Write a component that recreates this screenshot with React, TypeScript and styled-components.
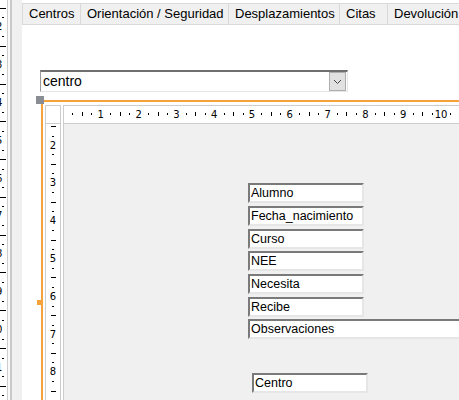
import styled, { createGlobalStyle } from 'styled-components'

const GlobalStyle = createGlobalStyle`
  html, body {
    margin: 0;
    padding: 0;
    overflow: hidden;
    background: #ffffff;
    font-family: "Liberation Sans", Arial, sans-serif;
  }
`

const ORANGE = '#f6a23a'
const CM = 37.8

const Page = styled.div`
  display: flex;
  width: 459px;
  height: 400px;
  overflow: hidden;
  background: #ffffff;
`

const OuterRuler = styled.div`
  flex: none;
  width: 7px;
  border-right: 1px solid #cdcdcd;
  overflow: hidden;
`

const Splitter = styled.div`
  flex: none;
  width: 14px;
  background: linear-gradient(
    to right,
    #fafafa 0 2px,
    #c9c9c9 2px 4px,
    #f0f0f0 4px
  );
`

const Main = styled.div`
  flex: 1;
  min-width: 0;
  display: flex;
  flex-direction: column;
`

const TabBar = styled.div`
  flex: none;
  display: flex;
  margin-top: 3px;
  height: 20px;
  border-top: 1px solid #d9d9d9;
  border-bottom: 1px solid #d9d9d9;
  background: #f0f0f0;
  overflow: hidden;
`

const Tab = styled.div<{ $w: number }>`
  flex: none;
  box-sizing: border-box;
  width: ${({ $w }) => $w}px;
  padding-left: 6px;
  border-right: 1px solid #d9d9d9;
  font-size: 13px;
  line-height: 20px;
  color: #000;
  white-space: nowrap;

  &:first-child {
    border-left: 1px solid #d9d9d9;
  }
`

const Designer = styled.div`
  flex: 1;
  display: flex;
  flex-direction: column;
  padding-left: 18px;
  min-height: 0;
`

const Combo = styled.div`
  flex: none;
  display: flex;
  align-items: center;
  box-sizing: border-box;
  margin-top: 45px;
  width: 308px;
  height: 22px;
  border-top: 2px solid #6f6f6f;
  border-left: 1px solid #9a9a9a;
  border-bottom: 1px solid #e6e6e6;
  border-right: 1px solid #e6e6e6;
  background: #fff;
`

const ComboText = styled.span`
  flex: 1;
  padding-left: 2px;
  font-size: 14px;
  line-height: 19px;
  color: #000;
`

const ComboButton = styled.div`
  flex: none;
  display: flex;
  align-items: center;
  justify-content: center;
  box-sizing: border-box;
  width: 17px;
  height: 19px;
  margin-right: 1px;
  background: #e1e1e1;
  border: 1px solid #adadad;
`

const Section = styled.div`
  position: relative;
  flex: 1;
  min-height: 0;
  margin: 8px 0 0 1px;
  padding: 3px 0 0 2px;
  border-top: 2px solid ${ORANGE};
  border-left: 2px solid ${ORANGE};
  display: grid;
  grid-template-columns: 16px 1fr;
  grid-template-rows: 19px 1fr;
  column-gap: 2px;
`

const SizeHandle = styled.div`
  position: absolute;
  left: -7px;
  top: -6px;
  width: 8px;
  height: 8px;
  background: #8a8d93;
`

const EdgeMark = styled.div`
  position: absolute;
  left: -6px;
  top: 198px;
  width: 4px;
  height: 5px;
  background: ${ORANGE};
`

const Corner = styled.div`
  box-sizing: border-box;
  border: 1px solid #cdcdcd;
  background: #fff;
`

const HRuler = styled.div`
  box-sizing: border-box;
  border: 1px solid #cdcdcd;
  border-right: none;
  background: #fff;
  overflow: hidden;
`

const VRuler = styled.div`
  box-sizing: border-box;
  border-left: 1px solid #cdcdcd;
  border-right: 1px solid #cdcdcd;
  background: #fff;
  overflow: hidden;
`

const Canvas = styled.div`
  position: relative;
  border-left: 1px solid #cdcdcd;
  background: #f0f0f0;
  overflow: hidden;
`

const Field = styled.div<{ $x: number; $y: number; $w: number }>`
  position: absolute;
  left: ${({ $x }) => $x}px;
  top: ${({ $y }) => $y}px;
  width: ${({ $w }) => $w}px;
  height: 20px;
  box-sizing: border-box;
  padding-left: 1px;
  border-style: solid;
  border-width: 2px;
  border-color: #7a7a7a #e6e6e6 #e6e6e6 #7a7a7a;
  background: #fff;
  font-size: 12.5px;
  line-height: 16px;
  color: #000;
  white-space: nowrap;
  overflow: hidden;
`

const tabs = [
  { label: 'Centros', w: 59 },
  { label: 'Orientación / Seguridad', w: 148 },
  { label: 'Desplazamientos', w: 111 },
  { label: 'Citas', w: 48 },
  { label: 'Devolución', w: 80 },
]

const fields = [
  { label: 'Alumno', x: 184, y: 59, w: 116 },
  { label: 'Fecha_nacimiento', x: 184, y: 82, w: 116 },
  { label: 'Curso', x: 184, y: 105, w: 116 },
  { label: 'NEE', x: 184, y: 127, w: 116 },
  { label: 'Necesita', x: 184, y: 150, w: 116 },
  { label: 'Recibe', x: 184, y: 173, w: 116 },
  { label: 'Observaciones', x: 184, y: 195, w: 260 },
  { label: 'Centro', x: 188, y: 249, w: 116 },
]

const HorizontalTicks = () => {
  const items = []
  for (let k = 0; k <= 11; k++) {
    const x = k * CM - 1
    if (k > 0)
      items.push(
        <text key={'n' + k} x={x} y={11.5} fontSize={10} textAnchor='middle'>
          {k}
        </text>,
      )
    items.push(<rect key={'a' + k} x={Math.round(x + CM / 4)} y={7} width={1} height={2} />)
    items.push(<rect key={'b' + k} x={Math.round(x + CM / 2)} y={6} width={1} height={4} />)
    items.push(<rect key={'c' + k} x={Math.round(x + (3 * CM) / 4)} y={7} width={1} height={2} />)
  }
  return (
    <svg width={420} height={17} fill='#000' fontFamily='"DejaVu Sans", sans-serif'>
      {items}
    </svg>
  )
}

const VerticalTicks = () => {
  const items = []
  for (let k = 1; k <= 8; k++) {
    const y = k * CM - 54.6
    if (k > 1)
      items.push(
        <text key={'n' + k} x={7} y={y + 3.5} fontSize={10} textAnchor='middle'>
          {k}
        </text>,
      )
    items.push(<rect key={'a' + k} x={6} y={Math.round(y + CM / 4)} width={2} height={1} />)
    items.push(<rect key={'b' + k} x={5} y={Math.round(y + CM / 2)} width={5} height={1} />)
    items.push(<rect key={'c' + k} x={6} y={Math.round(y + (3 * CM) / 4)} width={2} height={1} />)
  }
  return (
    <svg width={14} height={280} fill='#000' fontFamily='"DejaVu Sans", sans-serif'>
      {items}
    </svg>
  )
}

// outer report ruler, mostly hidden behind the splitter: only the right
// edge of its digits shows
const OuterTicks = () => {
  const items = []
  for (let k = 0; k <= 11; k++) {
    const y = k * CM - 11
    items.push(
      <text key={'n' + k} x={-4} y={y + 3.5} fontSize={10}>
        {(k + 1) % 10}
      </text>,
    )
    items.push(<rect key={'a' + k} x={2} y={Math.round(y + CM / 4)} width={2} height={1} />)
    items.push(<rect key={'b' + k} x={0} y={Math.round(y + CM / 2)} width={6} height={1} />)
    items.push(<rect key={'c' + k} x={2} y={Math.round(y + (3 * CM) / 4)} width={2} height={1} />)
  }
  return (
    <svg width={7} height={400} fill='#000' fontFamily='"DejaVu Sans", sans-serif'>
      {items}
    </svg>
  )
}

export default function App() {
  return (
    <>
      <GlobalStyle />
      <Page>
        <OuterRuler>
          <OuterTicks />
        </OuterRuler>
        <Splitter />
        <Main>
          <TabBar>
            {tabs.map(t => (
              <Tab key={t.label} $w={t.w}>
                {t.label}
              </Tab>
            ))}
          </TabBar>
          <Designer>
            <Combo>
              <ComboText>centro</ComboText>
              <ComboButton>
                <svg width={9} height={6} viewBox='0 0 9 6'>
                  <path d='M1 1l3.5 3.5L8 1' fill='none' stroke='#444' strokeWidth={1} />
                </svg>
              </ComboButton>
            </Combo>
            <Section>
              <SizeHandle />
              <EdgeMark />
              <Corner />
              <HRuler>
                <HorizontalTicks />
              </HRuler>
              <VRuler>
                <VerticalTicks />
              </VRuler>
              <Canvas>
                {fields.map(f => (
                  <Field key={f.label} $x={f.x} $y={f.y} $w={f.w}>
                    {f.label}
                  </Field>
                ))}
              </Canvas>
            </Section>
          </Designer>
        </Main>
      </Page>
    </>
  )
}
